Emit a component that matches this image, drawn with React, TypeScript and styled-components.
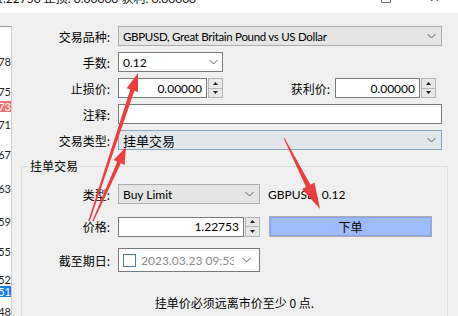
import React from "react";
import styled, { createGlobalStyle } from "styled-components";

const latin = '"Lato", "Noto Sans CJK SC", sans-serif';
const cjk = '"Noto Sans CJK SC", sans-serif';

const GlobalStyle = createGlobalStyle`
  html, body {
    margin: 0;
    padding: 0;
    background: #f0f0f0;
  }
  body {
    font-family: ${latin};
    font-size: 12px;
    color: #000;
  }
`;

const Window = styled.div`
  position: relative;
  width: 458px;
  height: 316px;
  overflow: hidden;
  background: #f0f0f0;
`;

const TitleStrip = styled.div`
  display: flex;
  height: 13px;
  overflow: hidden;
  background: #fff;
`;

const TitleText = styled.span`
  margin: -8px 0 0 -4px;
  line-height: 14px;
  white-space: nowrap;
  color: #111;
`;

const WinButtons = styled.div`
  display: flex;
  margin-left: auto;
  margin-right: 18px;
  gap: 38px;
`;

const MaxBox = styled.div`
  width: 8px;
  height: 8px;
  margin-top: -7px;
  border: 1px solid #777;
`;

const CloseGlyph = styled.span`
  margin-top: -9px;
  font-size: 13px;
  line-height: 12px;
  color: #222;
`;

const Body = styled.div`
  display: flex;
  height: 303px;
`;

const DepthList = styled.div`
  width: 11px;
  margin-top: 13px;
  border-top: 1px solid #9a9a9a;
  border-right: 1px solid #cfcfcf;
  background: #fff;
  overflow: hidden;
`;

const DepthItem = styled.div<{ $gap: number; $mark?: "red" | "blue" }>`
  display: flex;
  justify-content: flex-end;
  height: 11px;
  margin-top: ${(p) => p.$gap}px;
  font-size: 11px;
  line-height: 11px;
  white-space: nowrap;
  overflow: hidden;
  color: ${(p) => (p.$mark ? "#fff" : "#222")};
  background: ${(p) =>
    p.$mark === "red" ? "#f07070" : p.$mark === "blue" ? "#1a7fe6" : "transparent"};
`;

const Main = styled.div`
  flex: 1;
  padding-top: 13px;
`;

const Row = styled.div<{ $mt?: number; $h?: number }>`
  display: flex;
  align-items: center;
  height: ${(p) => p.$h ?? 20}px;
  margin-top: ${(p) => p.$mt ?? 0}px;
`;

const Label = styled.span<{ $w: number }>`
  width: ${(p) => p.$w}px;
  margin-right: 8px;
  text-align: right;
  white-space: nowrap;
  font-family: ${cjk};
`;

const SideLabel = styled.span`
  width: 107px;
  margin-right: 5px;
  text-align: right;
  font-family: ${cjk};
`;

const Combo = styled.div<{ $w: number; $focus?: boolean }>`
  box-sizing: border-box;
  display: flex;
  align-items: center;
  width: ${(p) => p.$w}px;
  height: 20px;
  padding: 0 5px 0 4px;
  background: ${(p) => (p.$focus ? "#e2e7eb" : "#e5e5e5")};
  border: 1px solid ${(p) => (p.$focus ? "#8aa6c1" : "#adadad")};
`;

const ComboText = styled.span<{ $cjk?: boolean; $tight?: boolean }>`
  flex: 1;
  overflow: hidden;
  white-space: nowrap;
  font-family: ${(p) => (p.$cjk ? cjk : latin)};
  font-size: ${(p) => (p.$cjk ? 13 : p.$tight ? 11.5 : 12)}px;
  letter-spacing: ${(p) => (p.$tight ? "-0.3px" : "0")};
`;

const TextBox = styled.div<{ $w: number; $right?: boolean }>`
  box-sizing: border-box;
  display: flex;
  align-items: center;
  justify-content: ${(p) => (p.$right ? "flex-end" : "flex-start")};
  width: ${(p) => p.$w}px;
  height: 20px;
  padding: 0 4px 0 4px;
  background: #fff;
  border: 1px solid #7a7a7a;
  white-space: nowrap;
`;

const BoxValue = styled.span`
  flex: 1;
`;

const Spinner = styled.div`
  box-sizing: border-box;
  display: flex;
  flex-direction: column;
  width: 15px;
  height: 20px;
  margin-left: 1px;
  border: 1px solid #b5b5b5;
  background: #e8e8e8;
`;

const SpinHalf = styled.div<{ $top?: boolean }>`
  flex: 1;
  display: flex;
  align-items: center;
  justify-content: center;
  border-bottom: ${(p) => (p.$top ? "1px solid #b5b5b5" : "none")};
`;

const Group = styled.fieldset`
  margin: 8px 10px 0 9px;
  padding: 0;
  height: 160px;
  border: 1px solid #dcdcdc;
  border-bottom: none;
`;

const GroupTitle = styled.legend`
  margin-left: 6px;
  padding: 0 2px;
  line-height: 16px;
  font-family: ${cjk};
`;

const SymbolInfo = styled.span`
  margin-left: 8px;
  white-space: nowrap;
`;

const OrderButton = styled.button`
  box-sizing: border-box;
  width: 163px;
  height: 21px;
  margin-left: 9px;
  padding: 0;
  border: 1px solid #adadad;
  background: #9ebcfb;
  box-shadow: inset 0 0 0 1px #85a6f2;
  font-family: ${cjk};
  font-size: 12px;
  color: #000;
`;

const DateBox = styled.div`
  box-sizing: border-box;
  display: flex;
  align-items: center;
  width: 142px;
  height: 24px;
  padding: 0 8px 0 4px;
  background: #fff;
  border: 1px solid #7a7a7a;
`;

const Check = styled.span`
  box-sizing: border-box;
  width: 13px;
  height: 13px;
  border: 1px solid #3f7fb6;
  background: #fff;
`;

const DateText = styled.span`
  flex: 1;
  margin: 0 8px 0 5px;
  overflow: hidden;
  white-space: nowrap;
  color: #8a8a8a;
`;

const Note = styled.div`
  margin-top: 22px;
  text-align: center;
  font-family: ${cjk};
`;

const Overlay = styled.svg`
  position: absolute;
  left: 0;
  top: 0;
  pointer-events: none;
`;

const Chevron = () => (
  <svg width="9" height="6" viewBox="0 0 9 6">
    <polyline points="0.5,1 4.5,5 8.5,1" fill="none" stroke="#5f5f5f" strokeWidth="1" />
  </svg>
);

const SpinBox = () => (
  <Spinner>
    <SpinHalf $top>
      <svg width="5" height="3" viewBox="0 0 5 3">
        <polygon points="0,3 2.5,0 5,3" fill="#222" />
      </svg>
    </SpinHalf>
    <SpinHalf>
      <svg width="5" height="3" viewBox="0 0 5 3">
        <polygon points="0,0 2.5,3 5,0" fill="#222" />
      </svg>
    </SpinHalf>
  </Spinner>
);

const depth = [
  { t: "1.22778", gap: 29 },
  { t: "1.22775", gap: 19 },
  { t: "1.22773", gap: 4, mark: "red" as const },
  { t: "1.22771", gap: 7 },
  { t: "1.22767", gap: 19 },
  { t: "1.22763", gap: 23 },
  { t: "1.22759", gap: 22 },
  { t: "1.22755", gap: 19 },
  { t: "1.22752", gap: 17 },
  { t: "1.22751", gap: 1, mark: "blue" as const },
  { t: "1.22748", gap: 9 },
];

function arrow(
  x1: number,
  y1: number,
  x2: number,
  y2: number,
  headLen: number,
  headHalf: number,
  tailHalf: number,
  neckHalf: number
) {
  const dx = x2 - x1;
  const dy = y2 - y1;
  const len = Math.hypot(dx, dy);
  const ux = dx / len;
  const uy = dy / len;
  const nx = -uy;
  const ny = ux;
  const bx = x2 - ux * headLen;
  const by = y2 - uy * headLen;
  const pts = [
    [x1 + nx * tailHalf, y1 + ny * tailHalf],
    [bx + nx * neckHalf, by + ny * neckHalf],
    [bx + nx * headHalf, by + ny * headHalf],
    [x2, y2],
    [bx - nx * headHalf, by - ny * headHalf],
    [bx - nx * neckHalf, by - ny * neckHalf],
    [x1 - nx * tailHalf, y1 - ny * tailHalf],
  ];
  return pts.map((p) => p.map((v) => v.toFixed(1)).join(",")).join(" ");
}

export default function App() {
  return (
    <Window>
      <GlobalStyle />
      <TitleStrip>
        <TitleText>1.22750 止损: 0.00000 获利: 0.00000</TitleText>
        <WinButtons>
          <MaxBox />
          <CloseGlyph>✕</CloseGlyph>
        </WinButtons>
      </TitleStrip>
      <Body>
        <DepthList>
          {depth.map((d, i) => (
            <DepthItem key={i} $gap={d.gap} $mark={d.mark}>
              {d.t}
            </DepthItem>
          ))}
        </DepthList>
        <Main>
          <Row>
            <Label $w={98}>交易品种:</Label>
            <Combo $w={324}>
              <ComboText $tight>GBPUSD, Great Britain Pound vs US Dollar</ComboText>
              <Chevron />
            </Combo>
          </Row>
          <Row $mt={6}>
            <Label $w={98}>手数:</Label>
            <TextBox $w={105}>
              <BoxValue>0.12</BoxValue>
              <Chevron />
            </TextBox>
          </Row>
          <Row $mt={6}>
            <Label $w={98}>止损价:</Label>
            <TextBox $w={89} $right>
              0.00000
            </TextBox>
            <SpinBox />
            <SideLabel>获利价:</SideLabel>
            <TextBox $w={85} $right>
              0.00000
            </TextBox>
            <SpinBox />
          </Row>
          <Row $mt={6}>
            <Label $w={98}>注释:</Label>
            <TextBox $w={324} />
          </Row>
          <Row $mt={6}>
            <Label $w={98}>交易类型:</Label>
            <Combo $w={324} $focus>
              <ComboText $cjk>挂单交易</ComboText>
              <Chevron />
            </Combo>
          </Row>
          <Group>
            <GroupTitle>挂单交易</GroupTitle>
            <Row $mt={10}>
              <Label $w={88}>类型:</Label>
              <Combo $w={142}>
                <ComboText>Buy Limit</ComboText>
                <Chevron />
              </Combo>
              <SymbolInfo>GBPUSD, 0.12</SymbolInfo>
            </Row>
            <Row $mt={12} $h={21}>
              <Label $w={88}>价格:</Label>
              <TextBox $w={126} $right>
                1.22753
              </TextBox>
              <SpinBox />
              <OrderButton>下单</OrderButton>
            </Row>
            <Row $mt={11} $h={24}>
              <Label $w={88}>截至期日:</Label>
              <DateBox>
                <Check />
                <DateText>2023.03.23 09:53</DateText>
                <Chevron />
              </DateBox>
            </Row>
            <Note>挂单价必须远离市价至少 0 点.</Note>
          </Group>
        </Main>
      </Body>
      <Overlay width="458" height="316" viewBox="0 0 458 316">
        <polygon points={arrow(89, 221, 138, 73, 18, 6, 0.7, 2.2)} fill="#e8403f" />
        <polygon points={arrow(93, 221, 126, 147, 17, 6, 0.7, 2)} fill="#e8403f" />
        <polygon points={arrow(284, 138, 320, 209, 26, 7, 0.5, 2.5)} fill="#e8403f" />
      </Overlay>
    </Window>
  );
}
